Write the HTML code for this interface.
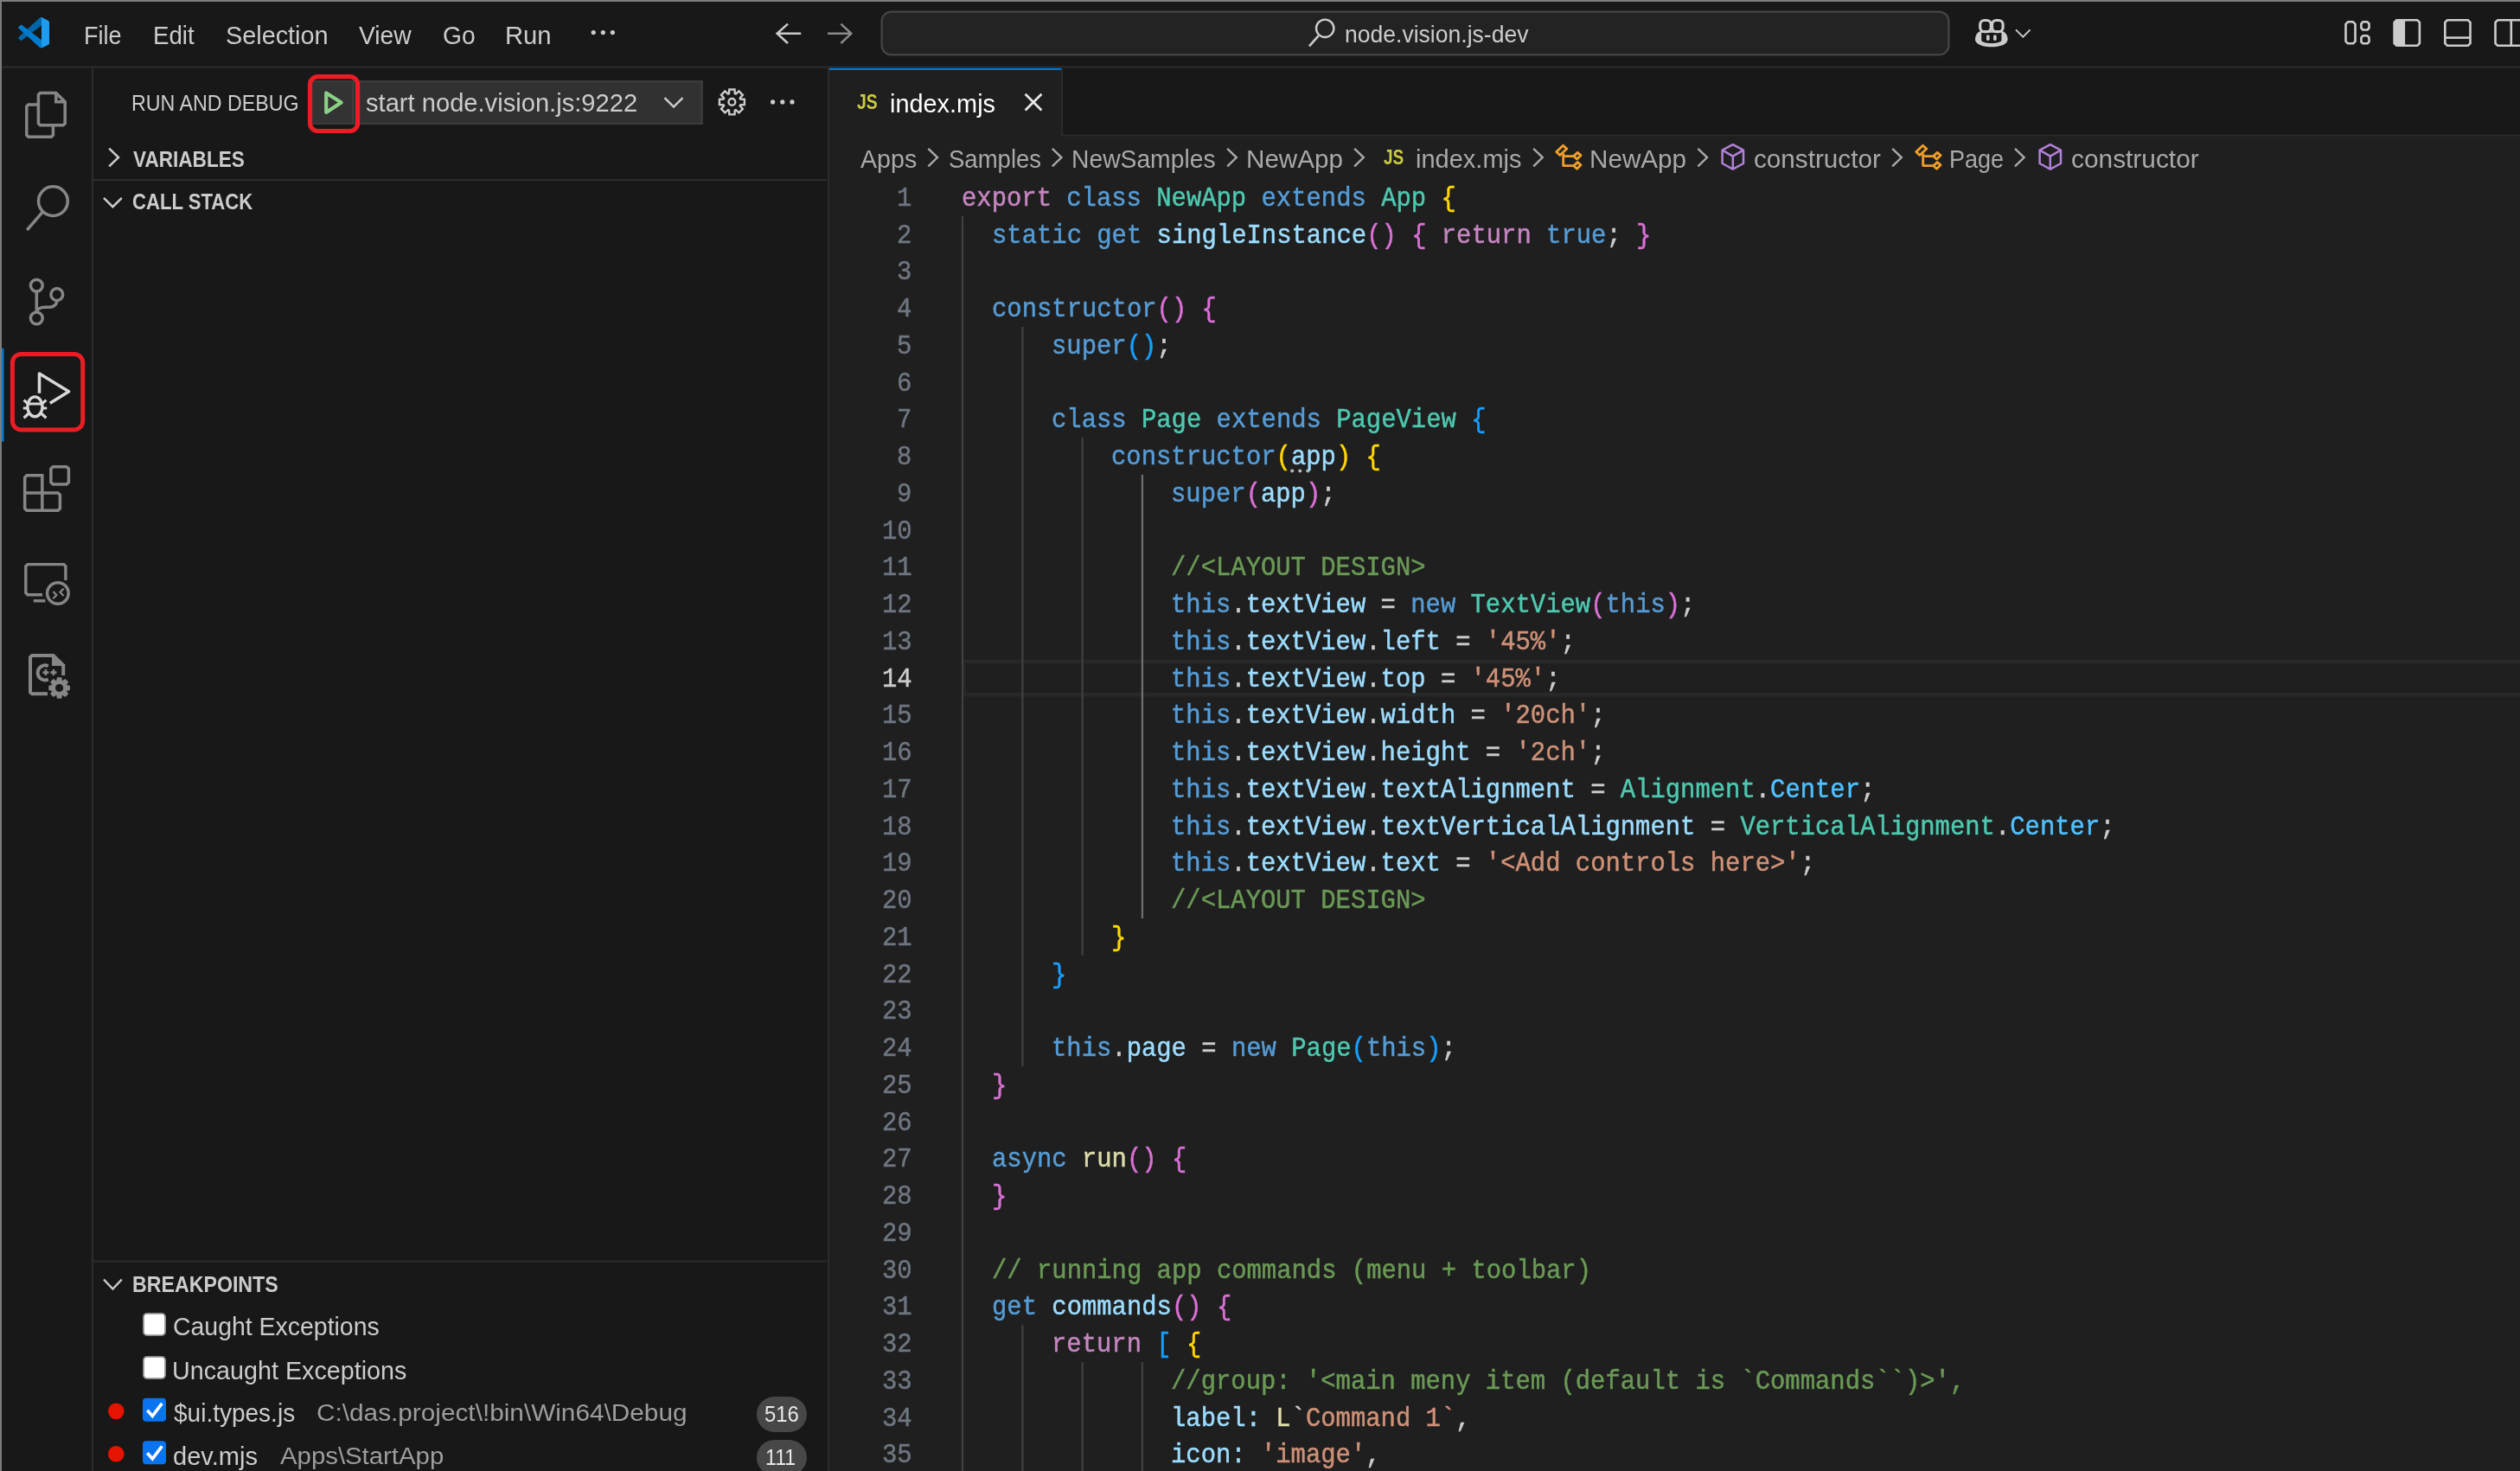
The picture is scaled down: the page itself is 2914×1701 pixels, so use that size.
<!DOCTYPE html>
<html><head><meta charset="utf-8"><style>
html,body{margin:0;padding:0;}
body{width:2914px;height:1701px;overflow:hidden;background:#181818;position:relative;font-family:"Liberation Sans",sans-serif;}
.ov{position:absolute;left:0;top:0;}
.t{position:absolute;white-space:pre;transform-origin:0 0;}
.c{position:absolute;white-space:pre;transform-origin:0 0;font-family:"Liberation Mono",monospace;-webkit-text-stroke:0.5px currentColor;font-size:31.5px;line-height:31.5px;transform:scaleX(0.91652);}
</style></head><body>
<svg class="ov" width="2914" height="1701" viewBox="0 0 2914 1701"><rect x="959.00" y="156.00" width="1955.00" height="1545.00" fill="#1f1f1f" /><rect x="0.00" y="76.50" width="2914.00" height="2.25" fill="#2b2b2b" /><rect x="105.75" y="78.75" width="2.25" height="1622.25" fill="#2b2b2b" /><rect x="957.00" y="78.75" width="2.25" height="1622.25" fill="#2b2b2b" /><rect x="959.00" y="78.75" width="268.00" height="78.75" fill="#1f1f1f" /><rect x="959.00" y="78.75" width="268.20" height="2.25" fill="#0078d4" /><rect x="1227.00" y="78.75" width="2.25" height="78.75" fill="#2b2b2b" /><rect x="1227.00" y="155.25" width="1687.00" height="2.25" fill="#2b2b2b" /><rect x="1229.25" y="81.00" width="1684.75" height="74.25" fill="#181818" /><rect x="108.00" y="207.00" width="848.25" height="2.25" fill="#2b2b2b" /><rect x="108.00" y="1457.50" width="848.25" height="2.25" fill="#2b2b2b" /><rect x="1114.30" y="762.75" width="1799.70" height="4.50" fill="#282828" /><rect x="1114.30" y="801.00" width="1799.70" height="4.50" fill="#282828" /><rect x="1114.30" y="762.75" width="2.20" height="42.75" fill="#282828" /><rect x="1111.90" y="249.75" width="2.25" height="1453.50" fill="#404040" /><rect x="1181.20" y="378.00" width="2.25" height="855.00" fill="#404040" /><rect x="1181.20" y="1532.25" width="2.25" height="171.00" fill="#404040" /><rect x="1250.50" y="506.25" width="2.25" height="598.50" fill="#404040" /><rect x="1250.50" y="1575.00" width="2.25" height="128.25" fill="#404040" /><rect x="1319.80" y="549.00" width="2.25" height="513.00" fill="#707070" /><rect x="1319.80" y="1575.00" width="2.25" height="128.25" fill="#404040" /><circle cx="1494.20" cy="544.5" r="2.1" fill="#b4b4b4"/><circle cx="1503.25" cy="544.5" r="2.1" fill="#b4b4b4"/><circle cx="1512.30" cy="544.5" r="2.1" fill="#b4b4b4"/><rect x="0.00" y="0.00" width="2914.00" height="2.00" fill="#7c7c7c" /><rect x="0.00" y="0.00" width="2.00" height="1701.00" fill="#7c7c7c" /><rect x="0.00" y="402.75" width="4.50" height="108.00" fill="#0078d4" /><rect x="0.00" y="0.00" width="2.00" height="1701.00" fill="#7c7c7c" /></svg>
<svg class="ov" width="2914" height="1701" viewBox="0 0 2914 1701"><g transform="translate(21,19.8) scale(0.36)">
<mask id="vsm" maskUnits="userSpaceOnUse" x="0" y="0" width="100" height="100">
<path fill-rule="evenodd" clip-rule="evenodd" d="M70.9119 99.3171C72.4869 99.9307 74.2828 99.8914 75.8725 99.1264L96.4608 89.2197C98.6242 88.1787 100 85.9892 100 83.5872V16.4133C100 14.0113 98.6243 11.8218 96.4609 10.7808L75.8725 0.873756C73.7862 -0.130129 71.3446 0.11576 69.5135 1.44695C69.252 1.63711 69.0028 1.84943 68.769 2.08341L29.3551 38.0415L12.1872 25.0096C10.589 23.7965 8.35363 23.8959 6.86933 25.2461L1.36303 30.2549C-0.452552 31.9064 -0.454633 34.7627 1.35853 36.417L16.2471 50.0001L1.35853 63.5832C-0.454633 65.2374 -0.452552 68.0938 1.36303 69.7453L6.86933 74.7541C8.35363 76.1043 10.589 76.2037 12.1872 74.9905L29.3551 61.9587L68.769 97.9167C69.3925 98.5406 70.1246 99.0104 70.9119 99.3171ZM75.0152 27.2989L45.1091 50.0001L75.0152 72.7012V27.2989Z" fill="#fff"/>
</mask>
<g mask="url(#vsm)">
<path d="M96.4614 10.7962L75.8569 0.875542C73.4719 -0.272773 70.6217 0.211611 68.75 2.08333L1.29858 63.5832C-0.515693 65.2373 -0.513607 68.0937 1.30308 69.7452L6.81272 74.754C8.29793 76.1042 10.5347 76.2036 12.1338 74.9905L93.3609 13.3699C96.0859 11.3026 100 13.2462 100 16.6667V16.4275C100 14.0265 98.6246 11.8378 96.4614 10.7962Z" fill="#0065a9"/>
<path d="M96.4614 89.2038L75.8569 99.1245C73.4719 100.273 70.6217 99.7884 68.75 97.9167L1.29858 36.4169C-0.515693 34.7627 -0.513607 31.9063 1.30308 30.2548L6.81272 25.246C8.29793 23.8958 10.5347 23.7964 12.1338 25.0095L93.3609 86.6301C96.0859 88.6974 100 86.7538 100 83.3334V83.5726C100 85.9735 98.6246 88.1622 96.4614 89.2038Z" fill="#007acc"/>
<path d="M75.8578 99.1263C73.4721 100.274 70.6219 99.7885 68.75 97.9166C71.0564 100.223 75 98.5895 75 95.3278V4.67213C75 1.41039 71.0564 -0.223106 68.75 2.08329C70.6219 0.211402 73.4721 -0.273666 75.8578 0.873633L96.4587 10.7807C98.6234 11.8217 100 14.0112 100 16.4132V83.5871C100 85.9891 98.6234 88.1786 96.4586 89.2196L75.8578 99.1263Z" fill="#1f9cf0"/>
</g></g>
<circle cx="686.2" cy="37.6" r="2.6" fill="#cccccc"/>
<circle cx="697.3" cy="37.6" r="2.6" fill="#cccccc"/>
<circle cx="708.4" cy="37.6" r="2.6" fill="#cccccc"/>
<path d="M911,27.6 L898.6,38.8 L911,50 M898.6,38.8 H926.2" fill="none" stroke="#cccccc" stroke-width="2.5"/>
<path d="M972.4,27.6 L984.3,38.8 L972.4,50 M957.1,38.8 H984.3" fill="none" stroke="#8b8b8b" stroke-width="2.5"/>
<rect x="1019.6" y="13.6" width="1233.8" height="49.8" rx="11" fill="#232323" stroke="#454545" stroke-width="2.25"/>
<circle cx="1532.2" cy="32.8" r="10.2" fill="none" stroke="#cccccc" stroke-width="2.4"/>
<path d="M1524.6,41.4 L1514,53.3" stroke="#cccccc" stroke-width="2.6" fill="none"/>
<path d="M2284,45.5 C2284,39 2289,35.5 2292,35.5 L2313.6,35.5 C2316.6,35.5 2321.6,39 2321.6,45.5 C2321.6,51.5 2312,54.3 2302.8,54.3 C2293.6,54.3 2284,51.5 2284,45.5 Z" fill="#cccccc"/>
<path d="M2291.2,37.8 H2314.4 V46.5 C2314.4,48.6 2309,50 2302.8,50 C2296.6,50 2291.2,48.6 2291.2,46.5 Z" fill="#181818"/>
<rect x="2297" y="40.2" width="3.6" height="6.8" rx="1.8" fill="#cccccc"/>
<rect x="2305.1" y="40.2" width="3.6" height="6.8" rx="1.8" fill="#cccccc"/>
<rect x="2289.7" y="23.5" width="12.6" height="13.2" rx="5" fill="#181818" stroke="#cccccc" stroke-width="3.2"/>
<rect x="2303.5" y="23.5" width="12.6" height="13.2" rx="5" fill="#181818" stroke="#cccccc" stroke-width="3.2"/>
<path d="M2331,34.4 L2339.3,42.6 L2347.6,34.4" fill="none" stroke="#cccccc" stroke-width="2"/>
<path d="M2715.00,25.30 H2721.00 L2723.50,27.80 V47.80 L2721.00,50.30 H2715.00 L2712.50,47.80 V27.80 Z" fill="none" stroke="#cccccc" stroke-width="2.6" stroke-linejoin="round"/>
<path d="M2732.40,25.30 H2737.50 L2739.50,27.30 V32.50 L2737.50,34.50 H2732.40 L2730.40,32.50 V27.30 Z" fill="none" stroke="#cccccc" stroke-width="2.6" stroke-linejoin="round"/>
<path d="M2732.40,41.30 H2737.50 L2739.50,43.30 V48.30 L2737.50,50.30 H2732.40 L2730.40,48.30 V43.30 Z" fill="none" stroke="#cccccc" stroke-width="2.6" stroke-linejoin="round"/>
<path d="M2771.10,23.30 H2795.40 L2797.90,25.80 V50.20 L2795.40,52.70 H2771.10 L2768.60,50.20 V25.80 Z" fill="none" stroke="#cccccc" stroke-width="2.6" stroke-linejoin="round"/>
<path d="M2768.6,25.8 L2771.1,23.3 H2781.1 V52.7 H2771.1 L2768.6,50.2 Z" fill="#cccccc"/>
<path d="M2829.80,23.30 H2854.00 L2856.50,25.80 V50.20 L2854.00,52.70 H2829.80 L2827.30,50.20 V25.80 Z" fill="none" stroke="#cccccc" stroke-width="2.6" stroke-linejoin="round"/>
<path d="M2827.3,43.6 H2856.5" stroke="#cccccc" stroke-width="2.6"/>
<path d="M2888.00,23.30 H2927.50 L2930.00,25.80 V50.20 L2927.50,52.70 H2888.00 L2885.50,50.20 V25.80 Z" fill="none" stroke="#cccccc" stroke-width="2.6" stroke-linejoin="round"/>
<path d="M2903.8,23.3 V52.7" stroke="#cccccc" stroke-width="2.6"/>
<path d="M44.4,109.5 L46.5,107.4 H64.8 L75.2,117.8 V142.7 L73.1,144.8 H46.5 L44.4,142.7 Z" fill="none" stroke="#868686" stroke-width="3.5" stroke-linejoin="miter"/>
<path d="M64.8,107.4 V117.8 H75.2" fill="none" stroke="#868686" stroke-width="3.5"/>
<path d="M44.4,120.9 H32.9 L30.8,123 V156.2 L32.9,158.3 H59.3 L61.4,156.2 V144.8" fill="none" stroke="#868686" stroke-width="3.5"/>
<circle cx="61.4" cy="232.6" r="16.9" fill="none" stroke="#868686" stroke-width="3.5"/>
<path d="M49.3,245.2 L31.2,266" fill="none" stroke="#868686" stroke-width="3.5"/>
<circle cx="42.3" cy="330.1" r="6.9" fill="none" stroke="#868686" stroke-width="3.5"/>
<circle cx="42.3" cy="367.9" r="6.9" fill="none" stroke="#868686" stroke-width="3.5"/>
<circle cx="65.8" cy="340.5" r="6.9" fill="none" stroke="#868686" stroke-width="3.5"/>
<path d="M42.3,337 V361" fill="none" stroke="#868686" stroke-width="3.5"/>
<path d="M65.8,347.4 C65.8,352 62,355.3 57,355.3 H52 C46,355.3 42.3,358 42.3,361" fill="none" stroke="#868686" stroke-width="3.5"/>
<path d="M45.5,454.7 V432 L79.6,452.8 L57.8,466.3" fill="none" stroke="#d7d7d7" stroke-width="3.6" stroke-linejoin="round"/>
<ellipse cx="40.4" cy="470.3" rx="8.6" ry="11.4" fill="none" stroke="#d7d7d7" stroke-width="3.4"/>
<path d="M32,467 H48.8 M26.8,472 H32.5 M48.3,472 H54.2 M27.6,462.6 L33.3,467.8 M53.4,462.6 L47.6,467.8 M27.6,483.2 L33.3,478 M53.4,483.2 L47.6,478" fill="none" stroke="#d7d7d7" stroke-width="3.2"/>
<rect x="14.4" y="409.4" width="81.3" height="87.6" rx="10" fill="none" stroke="#ec1c24" stroke-width="5"/>
<path d="M48.8,570 V549.8 H31 L28.7,552.1 V588 L31,590.3 H67.1 L69.4,588 V572.3 L67.1,570 H28.7 M48.8,570 V590.3" fill="none" stroke="#868686" stroke-width="3.5"/>
<path d="M61.30,539.70 H77.00 L79.40,542.10 V557.70 L77.00,560.10 H61.30 L58.90,557.70 V542.10 Z" fill="none" stroke="#868686" stroke-width="3.5" stroke-linejoin="round"/>
<path d="M49,687.8 H32 L29.8,685.6 V654.8 L32,652.6 H73.7 L75.9,654.8 V671" fill="none" stroke="#868686" stroke-width="3.4"/>
<path d="M38.8,694.8 H52.4" fill="none" stroke="#868686" stroke-width="3.4"/>
<circle cx="66.9" cy="686" r="12.3" fill="none" stroke="#868686" stroke-width="3.4"/>
<path d="M61.4,684 L65.4,688.1 L61.4,692.2 M73.6,680.6 L69.5,684.8 L73.6,689" fill="none" stroke="#868686" stroke-width="2.3"/>
<path d="M55,802.3 H37 L35,800.3 V760 L37,757.9 H61.4 M73.2,768 V781" fill="none" stroke="#868686" stroke-width="4"/>
<path d="M60,755.9 H62.5 L75.2,768.6 V770 H60 Z" fill="#868686"/>
<path d="M55.8,770.2 A8.5,8.5 0 1 0 55.8,785.6" fill="none" stroke="#868686" stroke-width="4"/>
<path d="M49.4,777.6 H56.4 M52.9,774.1 V781.1 M58.4,777.6 H65.4 M61.9,774.1 V781.1" fill="none" stroke="#868686" stroke-width="2.6"/>
<circle cx="68.6" cy="795.5" r="14" fill="#181818"/>
<path d="M65.20,787.17 L66.00,783.17 L71.20,783.17 L72.00,787.17 L72.09,787.20 L75.48,784.94 L79.16,788.62 L76.90,792.01 L76.93,792.10 L80.93,792.90 L80.93,798.10 L76.93,798.90 L76.90,798.99 L79.16,802.38 L75.48,806.06 L72.09,803.80 L72.00,803.83 L71.20,807.83 L66.00,807.83 L65.20,803.83 L65.11,803.80 L61.72,806.06 L58.04,802.38 L60.30,798.99 L60.27,798.90 L56.27,798.10 L56.27,792.90 L60.27,792.10 L60.30,792.01 L58.04,788.62 L61.72,784.94 L65.11,787.20 Z M64.00,795.50 a4.60,4.60 0 1 0 9.20,0 a4.60,4.60 0 1 0 -9.20,0 Z" fill="#868686" fill-rule="evenodd"/>
<rect x="361" y="93" width="451.8" height="51" fill="#313131"/>
<rect x="361" y="93" width="451.8" height="2.25" fill="#3c3c3c"/>
<rect x="361" y="141.75" width="451.8" height="2.25" fill="#3c3c3c"/>
<rect x="810.5" y="93" width="2.25" height="51" fill="#3c3c3c"/>
<rect x="361" y="95.25" width="45.8" height="46.5" fill="#333333"/>
<rect x="406.8" y="95.25" width="2.4" height="46.5" fill="#3c3c3c"/>
<path d="M377.2,107.4 L394.6,118.6 L377.2,129.9 Z" fill="none" stroke="#89d185" stroke-width="4.2" stroke-linejoin="round"/>
<rect x="358.5" y="88.6" width="55.1" height="62.9" rx="9" fill="none" stroke="#ec1c24" stroke-width="5.2"/>
<path d="M768.5,113.2 L779,123.6 L789.5,113.2" fill="none" stroke="#cccccc" stroke-width="2.5"/>
<path d="M843.00,108.18 L843.30,103.43 L849.50,103.43 L849.80,108.18 L850.87,108.62 L854.44,105.47 L858.83,109.86 L855.68,113.43 L856.12,114.50 L860.87,114.80 L860.87,121.00 L856.12,121.30 L855.68,122.37 L858.83,125.94 L854.44,130.33 L850.87,127.18 L849.80,127.62 L849.50,132.37 L843.30,132.37 L843.00,127.62 L841.93,127.18 L838.36,130.33 L833.97,125.94 L837.12,122.37 L836.68,121.30 L831.93,121.00 L831.93,114.80 L836.68,114.50 L837.12,113.43 L833.97,109.86 L838.36,105.47 L841.93,108.62 Z" fill="none" stroke="#cccccc" stroke-width="2.4" stroke-linejoin="miter"/>
<circle cx="846.4" cy="117.9" r="3.9" fill="none" stroke="#cccccc" stroke-width="2.4"/>
<circle cx="893.6" cy="117.9" r="2.6" fill="#cccccc"/>
<circle cx="904.8" cy="117.9" r="2.6" fill="#cccccc"/>
<circle cx="916.0" cy="117.9" r="2.6" fill="#cccccc"/>
<path d="M126.2,171.6 L137,182 L126.2,192.4" fill="none" stroke="#cccccc" stroke-width="2.5"/>
<path d="M120,228.8 L130.4,239.2 L140.8,228.8" fill="none" stroke="#cccccc" stroke-width="2.5"/>
<path d="M120,1479.5 L130.4,1490.5 L140.8,1479.5" fill="none" stroke="#cccccc" stroke-width="2.5"/>
<rect x="165.9" y="1518.9" width="25.2" height="25.2" rx="4" fill="#ffffff" stroke="#8a8a8a" stroke-width="1.8"/>
<rect x="165.9" y="1568.9" width="25.2" height="25.2" rx="4" fill="#ffffff" stroke="#8a8a8a" stroke-width="1.8"/>
<rect x="165" y="1616.8" width="27" height="27" rx="4" fill="#0a74f0"/>
<rect x="165" y="1666.3" width="27" height="27" rx="4" fill="#0a74f0"/>
<path d="M170.3,1630.8 L176.3,1637.4 L187.3,1622.8" fill="none" stroke="#ffffff" stroke-width="3.6"/>
<path d="M170.3,1680.3 L176.3,1686.9 L187.3,1672.3" fill="none" stroke="#ffffff" stroke-width="3.6"/>
<circle cx="134.3" cy="1631.8" r="9.3" fill="#e51400"/>
<circle cx="134.3" cy="1681.3" r="9.3" fill="#e51400"/>
<rect x="874.9" y="1614.9" width="58.1" height="41" rx="20.5" fill="#474747"/>
<rect x="874.9" y="1664.9" width="58.1" height="41" rx="20.5" fill="#474747"/>
<path d="M1185.6,108.7 L1204.4,127.5 M1204.4,108.7 L1185.6,127.5" fill="none" stroke="#e8e8e8" stroke-width="2.7"/>
<path d="M1073.4,171.9 L1084.0,182.1 L1073.4,192.3" fill="none" stroke="#a9a9a9" stroke-width="2.4"/>
<path d="M1216.8,171.9 L1227.4,182.1 L1216.8,192.3" fill="none" stroke="#a9a9a9" stroke-width="2.4"/>
<path d="M1419.2,171.9 L1429.8,182.1 L1419.2,192.3" fill="none" stroke="#a9a9a9" stroke-width="2.4"/>
<path d="M1566.2,171.9 L1576.8,182.1 L1566.2,192.3" fill="none" stroke="#a9a9a9" stroke-width="2.4"/>
<path d="M1773.2,171.9 L1783.8,182.1 L1773.2,192.3" fill="none" stroke="#a9a9a9" stroke-width="2.4"/>
<path d="M1963.4,171.9 L1974.0,182.1 L1963.4,192.3" fill="none" stroke="#a9a9a9" stroke-width="2.4"/>
<path d="M2188.2,171.9 L2198.8,182.1 L2188.2,192.3" fill="none" stroke="#a9a9a9" stroke-width="2.4"/>
<path d="M2330.0,171.9 L2340.6,182.1 L2330.0,192.3" fill="none" stroke="#a9a9a9" stroke-width="2.4"/>
<g transform="translate(0.0,0)" fill="none" stroke="#ee9d28" stroke-width="2.9" stroke-linejoin="round"><path d="M1799.8,175.6 L1807.5,168.3 L1811.8,172 L1803.8,179.5 Z"/><path d="M1807.7,177.5 V191.6 H1820 M1807.7,180.6 H1820"/><path d="M1819.8,180.6 L1824.2,176.4 L1828,179.6 L1823.5,184 Z"/><path d="M1819.8,191.8 L1824.2,187.6 L1828,190.8 L1823.5,195.2 Z"/></g>
<g transform="translate(416.0,0)" fill="none" stroke="#ee9d28" stroke-width="2.9" stroke-linejoin="round"><path d="M1799.8,175.6 L1807.5,168.3 L1811.8,172 L1803.8,179.5 Z"/><path d="M1807.7,177.5 V191.6 H1820 M1807.7,180.6 H1820"/><path d="M1819.8,180.6 L1824.2,176.4 L1828,179.6 L1823.5,184 Z"/><path d="M1819.8,191.8 L1824.2,187.6 L1828,190.8 L1823.5,195.2 Z"/></g>
<g transform="translate(0.0,0)" fill="none" stroke="#b180d7" stroke-width="2.5" stroke-linejoin="round"><path d="M2003.8,167.2 L2016,173.6 V189 L2003.8,195.6 L1991.6,189 V173.6 Z"/><path d="M1991.6,173.6 L2003.8,180.6 L2016,173.6 M2003.8,180.6 V195.6"/></g>
<g transform="translate(367.0,0)" fill="none" stroke="#b180d7" stroke-width="2.5" stroke-linejoin="round"><path d="M2003.8,167.2 L2016,173.6 V189 L2003.8,195.6 L1991.6,189 V173.6 Z"/><path d="M1991.6,173.6 L2003.8,180.6 L2016,173.6 M2003.8,180.6 V195.6"/></g></svg>
<div class="t" style="left:97.00px;top:25.60px;font-size:30px;line-height:30px;color:#cccccc;transform:scaleX(0.9024)">File</div><div class="t" style="left:176.86px;top:25.60px;font-size:30px;line-height:30px;color:#cccccc;transform:scaleX(0.9214)">Edit</div><div class="t" style="left:261.04px;top:25.60px;font-size:30px;line-height:30px;color:#cccccc;transform:scaleX(0.9608)">Selection</div><div class="t" style="left:415.00px;top:25.60px;font-size:30px;line-height:30px;color:#cccccc;transform:scaleX(0.9411)">View</div><div class="t" style="left:512.06px;top:25.60px;font-size:30px;line-height:30px;color:#cccccc;transform:scaleX(0.9391)">Go</div><div class="t" style="left:584.05px;top:25.60px;font-size:30px;line-height:30px;color:#cccccc;transform:scaleX(0.9737)">Run</div><div class="t" style="left:1555.13px;top:25.62px;font-size:27.5px;line-height:27.5px;color:#cccccc;transform:scaleX(0.9650)">node.vision.js-dev</div><div class="t" style="left:152.21px;top:105.99px;font-size:26px;line-height:26px;color:#cccccc;transform:scaleX(0.8934)">RUN AND DEBUG</div><div class="t" style="left:422.60px;top:104.30px;font-size:30px;line-height:30px;color:#cccccc;transform:scaleX(0.9708)">start node.vision.js:9222</div><div class="t" style="left:154.00px;top:170.79px;font-size:26px;line-height:26px;color:#cccccc;font-weight:700;transform:scaleX(0.8684)">VARIABLES</div><div class="t" style="left:153.15px;top:220.49px;font-size:26px;line-height:26px;color:#cccccc;font-weight:700;transform:scaleX(0.8507)">CALL STACK</div><div class="t" style="left:152.61px;top:1471.99px;font-size:26px;line-height:26px;color:#cccccc;font-weight:700;transform:scaleX(0.8915)">BREAKPOINTS</div><div class="t" style="left:199.85px;top:1519.30px;font-size:30px;line-height:30px;color:#cccccc;transform:scaleX(0.9479)">Caught Exceptions</div><div class="t" style="left:198.89px;top:1569.60px;font-size:30px;line-height:30px;color:#cccccc;transform:scaleX(0.9572)">Uncaught Exceptions</div><div class="t" style="left:200.80px;top:1619.00px;font-size:30px;line-height:30px;color:#cccccc;transform:scaleX(0.9338)">$ui.types.js</div><div class="t" style="left:366.40px;top:1621.34px;font-size:27px;line-height:27px;color:#9d9d9d;transform:scaleX(1.1024)">C:\das.project\!bin\Win64\Debug</div><div class="t" style="left:199.83px;top:1668.50px;font-size:30px;line-height:30px;color:#cccccc;transform:scaleX(0.9684)">dev.mjs</div><div class="t" style="left:324.40px;top:1671.04px;font-size:27px;line-height:27px;color:#9d9d9d;transform:scaleX(1.0867)">Apps\StartApp</div><div class="t" style="left:884.18px;top:1621.99px;font-size:26px;line-height:26px;color:#e8e8e8;transform:scaleX(0.9184)">516</div><div class="t" style="left:885.21px;top:1671.79px;font-size:26px;line-height:26px;color:#e8e8e8;transform:scaleX(0.8907)">111</div><div class="t" style="left:991.40px;top:106.16px;font-size:24.5px;line-height:24.5px;color:#cbcb41;font-weight:700;transform:scaleX(0.7899)">JS</div><div class="t" style="left:1029.47px;top:105.10px;font-size:30px;line-height:30px;color:#ffffff;transform:scaleX(0.9627)">index.mjs</div><div class="t" style="left:995.00px;top:168.90px;font-size:30px;line-height:30px;color:#a9a9a9;transform:scaleX(0.9543)">Apps</div><div class="t" style="left:1096.68px;top:168.90px;font-size:30px;line-height:30px;color:#a9a9a9;transform:scaleX(0.9179)">Samples</div><div class="t" style="left:1239.12px;top:168.90px;font-size:30px;line-height:30px;color:#a9a9a9;transform:scaleX(0.9422)">NewSamples</div><div class="t" style="left:1441.03px;top:168.90px;font-size:30px;line-height:30px;color:#a9a9a9;transform:scaleX(0.9873)">NewApp</div><div class="t" style="left:1600.00px;top:169.76px;font-size:24.5px;line-height:24.5px;color:#cbcb41;font-weight:700;transform:scaleX(0.7764)">JS</div><div class="t" style="left:1637.07px;top:168.90px;font-size:30px;line-height:30px;color:#a9a9a9;transform:scaleX(0.9668)">index.mjs</div><div class="t" style="left:1837.62px;top:168.90px;font-size:30px;line-height:30px;color:#a9a9a9;transform:scaleX(0.9882)">NewApp</div><div class="t" style="left:2028.01px;top:168.90px;font-size:30px;line-height:30px;color:#a9a9a9;transform:scaleX(0.9892)">constructor</div><div class="t" style="left:2254.00px;top:168.90px;font-size:30px;line-height:30px;color:#a9a9a9;transform:scaleX(0.9009)">Page</div><div class="t" style="left:2395.30px;top:168.90px;font-size:30px;line-height:30px;color:#a9a9a9;transform:scaleX(0.9953)">constructor</div>
<div class="c" style="left:1111.90px;top:213.77px"><span style="color:#c586c0">export</span><span style="color:#cccccc"> </span><span style="color:#569cd6">class</span><span style="color:#cccccc"> </span><span style="color:#4ec9b0">NewApp</span><span style="color:#cccccc"> </span><span style="color:#569cd6">extends</span><span style="color:#cccccc"> </span><span style="color:#4ec9b0">App</span><span style="color:#cccccc"> </span><span style="color:#ffd700">{</span></div><div class="c" style="left:1036.97px;top:213.77px;color:#6e7681">1</div><div class="c" style="left:1146.55px;top:256.52px"><span style="color:#569cd6">static</span><span style="color:#cccccc"> </span><span style="color:#569cd6">get</span><span style="color:#cccccc"> </span><span style="color:#9cdcfe">singleInstance</span><span style="color:#da70d6">()</span><span style="color:#cccccc"> </span><span style="color:#da70d6">{</span><span style="color:#cccccc"> </span><span style="color:#c586c0">return</span><span style="color:#cccccc"> </span><span style="color:#569cd6">true</span><span style="color:#cccccc">;</span><span style="color:#cccccc"> </span><span style="color:#da70d6">}</span></div><div class="c" style="left:1036.97px;top:256.52px;color:#6e7681">2</div><div class="c" style="left:1036.97px;top:299.27px;color:#6e7681">3</div><div class="c" style="left:1146.55px;top:342.02px"><span style="color:#569cd6">constructor</span><span style="color:#da70d6">()</span><span style="color:#cccccc"> </span><span style="color:#da70d6">{</span></div><div class="c" style="left:1036.97px;top:342.02px;color:#6e7681">4</div><div class="c" style="left:1215.85px;top:384.77px"><span style="color:#569cd6">super</span><span style="color:#179fff">()</span><span style="color:#cccccc">;</span></div><div class="c" style="left:1036.97px;top:384.77px;color:#6e7681">5</div><div class="c" style="left:1036.97px;top:427.52px;color:#6e7681">6</div><div class="c" style="left:1215.85px;top:470.27px"><span style="color:#569cd6">class</span><span style="color:#cccccc"> </span><span style="color:#4ec9b0">Page</span><span style="color:#cccccc"> </span><span style="color:#569cd6">extends</span><span style="color:#cccccc"> </span><span style="color:#4ec9b0">PageView</span><span style="color:#cccccc"> </span><span style="color:#179fff">{</span></div><div class="c" style="left:1036.97px;top:470.27px;color:#6e7681">7</div><div class="c" style="left:1285.15px;top:513.02px"><span style="color:#569cd6">constructor</span><span style="color:#ffd700">(</span><span style="color:#9cdcfe">app</span><span style="color:#ffd700">)</span><span style="color:#cccccc"> </span><span style="color:#ffd700">{</span></div><div class="c" style="left:1036.97px;top:513.02px;color:#6e7681">8</div><div class="c" style="left:1354.45px;top:555.77px"><span style="color:#569cd6">super</span><span style="color:#da70d6">(</span><span style="color:#9cdcfe">app</span><span style="color:#da70d6">)</span><span style="color:#cccccc">;</span></div><div class="c" style="left:1036.97px;top:555.77px;color:#6e7681">9</div><div class="c" style="left:1019.65px;top:598.52px;color:#6e7681">10</div><div class="c" style="left:1354.45px;top:641.27px"><span style="color:#6a9955">//&lt;LAYOUT DESIGN&gt;</span></div><div class="c" style="left:1019.65px;top:641.27px;color:#6e7681">11</div><div class="c" style="left:1354.45px;top:684.02px"><span style="color:#569cd6">this</span><span style="color:#cccccc">.</span><span style="color:#9cdcfe">textView</span><span style="color:#cccccc"> = </span><span style="color:#569cd6">new</span><span style="color:#cccccc"> </span><span style="color:#4ec9b0">TextView</span><span style="color:#da70d6">(</span><span style="color:#569cd6">this</span><span style="color:#da70d6">)</span><span style="color:#cccccc">;</span></div><div class="c" style="left:1019.65px;top:684.02px;color:#6e7681">12</div><div class="c" style="left:1354.45px;top:726.77px"><span style="color:#569cd6">this</span><span style="color:#cccccc">.</span><span style="color:#9cdcfe">textView</span><span style="color:#cccccc">.</span><span style="color:#9cdcfe">left</span><span style="color:#cccccc"> = </span><span style="color:#ce9178">&#x27;45%&#x27;</span><span style="color:#cccccc">;</span></div><div class="c" style="left:1019.65px;top:726.77px;color:#6e7681">13</div><div class="c" style="left:1354.45px;top:769.52px"><span style="color:#569cd6">this</span><span style="color:#cccccc">.</span><span style="color:#9cdcfe">textView</span><span style="color:#cccccc">.</span><span style="color:#9cdcfe">top</span><span style="color:#cccccc"> = </span><span style="color:#ce9178">&#x27;45%&#x27;</span><span style="color:#cccccc">;</span></div><div class="c" style="left:1019.65px;top:769.52px;color:#cccccc">14</div><div class="c" style="left:1354.45px;top:812.27px"><span style="color:#569cd6">this</span><span style="color:#cccccc">.</span><span style="color:#9cdcfe">textView</span><span style="color:#cccccc">.</span><span style="color:#9cdcfe">width</span><span style="color:#cccccc"> = </span><span style="color:#ce9178">&#x27;20ch&#x27;</span><span style="color:#cccccc">;</span></div><div class="c" style="left:1019.65px;top:812.27px;color:#6e7681">15</div><div class="c" style="left:1354.45px;top:855.02px"><span style="color:#569cd6">this</span><span style="color:#cccccc">.</span><span style="color:#9cdcfe">textView</span><span style="color:#cccccc">.</span><span style="color:#9cdcfe">height</span><span style="color:#cccccc"> = </span><span style="color:#ce9178">&#x27;2ch&#x27;</span><span style="color:#cccccc">;</span></div><div class="c" style="left:1019.65px;top:855.02px;color:#6e7681">16</div><div class="c" style="left:1354.45px;top:897.77px"><span style="color:#569cd6">this</span><span style="color:#cccccc">.</span><span style="color:#9cdcfe">textView</span><span style="color:#cccccc">.</span><span style="color:#9cdcfe">textAlignment</span><span style="color:#cccccc"> = </span><span style="color:#4ec9b0">Alignment</span><span style="color:#cccccc">.</span><span style="color:#4fc1ff">Center</span><span style="color:#cccccc">;</span></div><div class="c" style="left:1019.65px;top:897.77px;color:#6e7681">17</div><div class="c" style="left:1354.45px;top:940.52px"><span style="color:#569cd6">this</span><span style="color:#cccccc">.</span><span style="color:#9cdcfe">textView</span><span style="color:#cccccc">.</span><span style="color:#9cdcfe">textVerticalAlignment</span><span style="color:#cccccc"> = </span><span style="color:#4ec9b0">VerticalAlignment</span><span style="color:#cccccc">.</span><span style="color:#4fc1ff">Center</span><span style="color:#cccccc">;</span></div><div class="c" style="left:1019.65px;top:940.52px;color:#6e7681">18</div><div class="c" style="left:1354.45px;top:983.27px"><span style="color:#569cd6">this</span><span style="color:#cccccc">.</span><span style="color:#9cdcfe">textView</span><span style="color:#cccccc">.</span><span style="color:#9cdcfe">text</span><span style="color:#cccccc"> = </span><span style="color:#ce9178">&#x27;&lt;Add controls here&gt;&#x27;</span><span style="color:#cccccc">;</span></div><div class="c" style="left:1019.65px;top:983.27px;color:#6e7681">19</div><div class="c" style="left:1354.45px;top:1026.02px"><span style="color:#6a9955">//&lt;LAYOUT DESIGN&gt;</span></div><div class="c" style="left:1019.65px;top:1026.02px;color:#6e7681">20</div><div class="c" style="left:1285.15px;top:1068.77px"><span style="color:#ffd700">}</span></div><div class="c" style="left:1019.65px;top:1068.77px;color:#6e7681">21</div><div class="c" style="left:1215.85px;top:1111.52px"><span style="color:#179fff">}</span></div><div class="c" style="left:1019.65px;top:1111.52px;color:#6e7681">22</div><div class="c" style="left:1019.65px;top:1154.27px;color:#6e7681">23</div><div class="c" style="left:1215.85px;top:1197.02px"><span style="color:#569cd6">this</span><span style="color:#cccccc">.</span><span style="color:#9cdcfe">page</span><span style="color:#cccccc"> = </span><span style="color:#569cd6">new</span><span style="color:#cccccc"> </span><span style="color:#4ec9b0">Page</span><span style="color:#179fff">(</span><span style="color:#569cd6">this</span><span style="color:#179fff">)</span><span style="color:#cccccc">;</span></div><div class="c" style="left:1019.65px;top:1197.02px;color:#6e7681">24</div><div class="c" style="left:1146.55px;top:1239.77px"><span style="color:#da70d6">}</span></div><div class="c" style="left:1019.65px;top:1239.77px;color:#6e7681">25</div><div class="c" style="left:1019.65px;top:1282.52px;color:#6e7681">26</div><div class="c" style="left:1146.55px;top:1325.27px"><span style="color:#569cd6">async</span><span style="color:#cccccc"> </span><span style="color:#dcdcaa">run</span><span style="color:#da70d6">()</span><span style="color:#cccccc"> </span><span style="color:#da70d6">{</span></div><div class="c" style="left:1019.65px;top:1325.27px;color:#6e7681">27</div><div class="c" style="left:1146.55px;top:1368.02px"><span style="color:#da70d6">}</span></div><div class="c" style="left:1019.65px;top:1368.02px;color:#6e7681">28</div><div class="c" style="left:1019.65px;top:1410.77px;color:#6e7681">29</div><div class="c" style="left:1146.55px;top:1453.52px"><span style="color:#6a9955">// running app commands (menu + toolbar)</span></div><div class="c" style="left:1019.65px;top:1453.52px;color:#6e7681">30</div><div class="c" style="left:1146.55px;top:1496.27px"><span style="color:#569cd6">get</span><span style="color:#cccccc"> </span><span style="color:#9cdcfe">commands</span><span style="color:#da70d6">()</span><span style="color:#cccccc"> </span><span style="color:#da70d6">{</span></div><div class="c" style="left:1019.65px;top:1496.27px;color:#6e7681">31</div><div class="c" style="left:1215.85px;top:1539.02px"><span style="color:#c586c0">return</span><span style="color:#cccccc"> </span><span style="color:#179fff">[</span><span style="color:#cccccc"> </span><span style="color:#ffd700">{</span></div><div class="c" style="left:1019.65px;top:1539.02px;color:#6e7681">32</div><div class="c" style="left:1354.45px;top:1581.77px"><span style="color:#6a9955">//group: &#x27;&lt;main meny item (default is `Commands``)&gt;&#x27;,</span></div><div class="c" style="left:1019.65px;top:1581.77px;color:#6e7681">33</div><div class="c" style="left:1354.45px;top:1624.52px"><span style="color:#9cdcfe">label:</span><span style="color:#cccccc"> </span><span style="color:#dcdcaa">L</span><span style="color:#cccccc">`</span><span style="color:#ce9178">Command 1`</span><span style="color:#cccccc">,</span></div><div class="c" style="left:1019.65px;top:1624.52px;color:#6e7681">34</div><div class="c" style="left:1354.45px;top:1667.27px"><span style="color:#9cdcfe">icon:</span><span style="color:#cccccc"> </span><span style="color:#ce9178">&#x27;image&#x27;</span><span style="color:#cccccc">,</span></div><div class="c" style="left:1019.65px;top:1667.27px;color:#6e7681">35</div>
</body></html>
